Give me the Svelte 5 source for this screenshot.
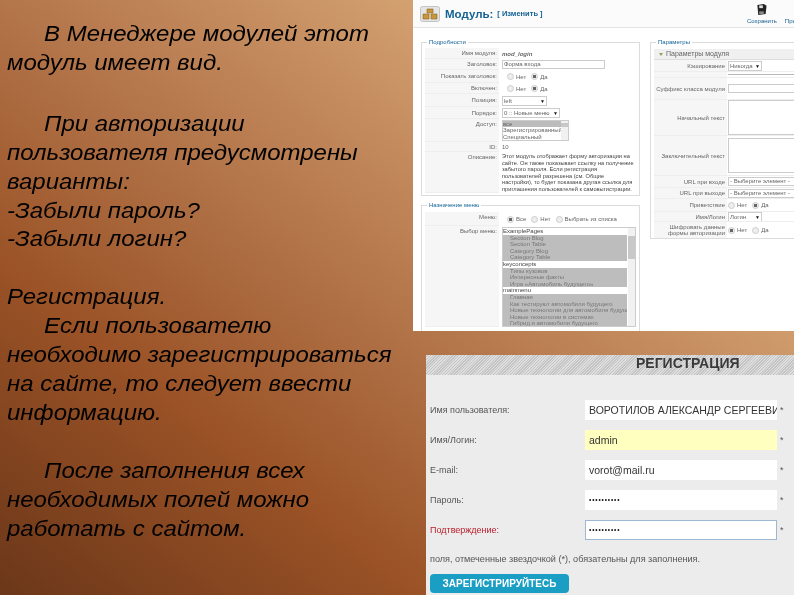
<script>
  const detailRows = [
    { label: 'Имя модуля:', h: 11, value: 'mod_login', kind: 'strong' },
    { label: 'Заголовок:', h: 11, value: 'Форма входа', kind: 'input' },
    { label: 'Показать заголовок:', h: 13, kind: 'radio', options: ['Нет', 'Да'], on: 1 },
    { label: 'Включен:', h: 11, kind: 'radio', options: ['Нет', 'Да'], on: 1 },
    { label: 'Позиция:', h: 13, value: 'left', kind: 'select', w: 41 },
    { label: 'Порядок:', h: 12, value: '0 :: Новые меню', kind: 'select', w: 54 }
  ];

  const menuList = [
    { text: 'ExamplePages', head: true },
    { text: 'Section Blog' },
    { text: 'Section Table' },
    { text: 'Category Blog' },
    { text: 'Category Table' },
    { text: 'keyconcepts', head: true },
    { text: 'Типы кузовов' },
    { text: 'Интересные факты' },
    { text: 'Игра «Автомобиль будущего»' },
    { text: 'mainmenu', head: true },
    { text: 'Главная' },
    { text: 'Как тестируют автомобили будущего' },
    { text: 'Новые технологии для автомобиля будущего?' },
    { text: 'Новые технологии в системах' },
    { text: 'Гибрид и автомобили будущего' }
  ];

  const regRows = [
    { label: 'Имя пользователя:', value: 'ВОРОТИЛОВ АЛЕКСАНДР СЕРГЕЕВИ' },
    { label: 'Имя/Логин:', value: 'admin', kind: 'filled' },
    { label: 'E-mail:', value: 'vorot@mail.ru' },
    { label: 'Пароль:', value: '••••••••••', dots: true },
    { label: 'Подтверждение:', value: '••••••••••', kind: 'error', dots: true }
  ];
</script>

<div class="slide">
  <section class="copy">
    <div class="flow">
      <p class="ind">В Менеджере модулей этот модуль имеет вид.</p>
      <p class="ind second">При авторизации пользователя предусмотрены варианты:</p>
      <p>-Забыли пароль?</p>
      <p>-Забыли логин?</p>
      <p class="gap">Регистрация.</p>
      <p class="ind">Если пользователю необходимо зарегистрироваться на сайте, то следует ввести информацию.</p>
      <p class="gap ind">После заполнения всех необходимых полей можно работать с сайтом.</p>
    </div>
  </section>

  <section class="shots">
    <div class="admin">
      <header class="toolbar">
        <svg class="box" width="20" height="16" viewBox="0 0 20 16">
          <rect x="0.5" y="0.5" width="19" height="15" rx="2" fill="#e4e4e4" stroke="#c4c4c4" />
          <path d="M7 3h6v4H7zM3 8h6v5H3zM11 8h6v5h-6z" fill="#c9963c" stroke="#8a6426" stroke-width="0.6" />
        </svg>
        <span class="mod-title">Модуль:</span>
        <span class="mod-sub">[ Изменить ]</span>
        <div class="tools">
          <span class="tool">
            <svg width="11" height="11" viewBox="0 0 11 12">
              <path d="M1 1l7-1 3 2-1 9-8 1z" fill="#222" />
              <path d="M3 1.5h4v3H3z" fill="#ddd" />
              <path d="M3 8h5v3H3z" fill="#888" />
            </svg>
            Сохранить
          </span>
          <span class="tool">
            <svg width="11" height="11" viewBox="0 0 11 12">
              <path d="M1 7l3 3 6-8" fill="none" stroke="#5f9b32" stroke-width="2" />
            </svg>
            Применить
          </span>
        </div>
      </header>

      <div class="panes">
        <div class="left-pane">
          <fieldset class="details">
            <legend>Подробности</legend>
            {#each detailRows as row}
              <div class="row" style="height:{row.h}px">
                <span class="lab">{row.label}</span>
                <span class="val" class:rad={row.kind === 'radio'}>
                  {#if row.kind === 'strong'}
                    <b><i>{row.value}</i></b>
                  {:else if row.kind === 'input'}
                    <span class="field wide">{row.value}</span>
                  {:else if row.kind === 'select'}
                    <span class="pick" style="width:{row.w}px">{row.value}<em>▼</em></span>
                  {:else}
                    {#each row.options as opt, i}
                      <span class="radio" class:on={row.on === i}></span>
                      <span class="opt">{opt}</span>
                    {/each}
                  {/if}
                </span>
              </div>
            {/each}
            <div class="row" style="height:23px">
              <span class="lab t">Доступ:</span>
              <span class="val top">
                <span class="listbox">
                  <span class="sel">все</span>
                  <span>Зарегистрированный</span>
                  <span>Специальный</span>
                  <i class="sb"></i>
                </span>
              </span>
            </div>
            <div class="row" style="height:10px">
              <span class="lab">ID:</span>
              <span class="val">10</span>
            </div>
            <div class="row" style="height:41px">
              <span class="lab t">Описание:</span>
              <span class="val top desc">Этот модуль отображает форму авторизации на сайте. Он также показывает ссылку на получение забытого пароля. Если регистрация пользователей разрешена (см. Общие настройки), то будет показана другая ссылка для приглашения пользователей к самовыгистрации.</span>
            </div>
          </fieldset>

          <fieldset class="menu">
            <legend>Назначение меню</legend>
            <div class="row" style="height:14px">
              <span class="lab t">Меню:</span>
              <span class="val rad">
                <span class="radio on"></span><span class="opt">Все</span>
                <span class="radio"></span><span class="opt">Нет</span>
                <span class="radio"></span><span class="opt">Выбрать из списка</span>
              </span>
            </div>
            <div class="row" style="height:101px">
              <span class="lab t">Выбор меню:</span>
              <span class="val top">
                <span class="menulist">
                  {#each menuList as item}
                    <span class:head={item.head}>{item.text}</span>
                  {/each}
                  <i class="sb"></i>
                </span>
              </span>
            </div>
          </fieldset>
        </div>

        <fieldset class="params">
          <legend>Параметры</legend>
          <div class="params-head"><span class="tri"></span>Параметры модуля</div>
          <div class="prow" style="height:12px"><span class="plab">Кэширование</span><span class="pick small">Никогда<em>▼</em></span></div>
          <div class="prow" style="height:6px"><span class="plab"></span><span class="rule"></span></div>
          <div class="prow" style="height:22px"><span class="plab">Суффикс класса модуля</span><span class="field long"></span></div>
          <div class="prow" style="height:36px"><span class="plab">Начальный текст</span><span class="area"></span></div>
          <div class="prow" style="height:40px"><span class="plab">Заключительный текст</span><span class="area"></span></div>
          <div class="prow" style="height:12px"><span class="plab">URL при входе</span><span class="field long">- Выберите элемент -</span></div>
          <div class="prow" style="height:11px"><span class="plab">URL при выходе</span><span class="field long">- Выберите элемент -</span></div>
          <div class="prow" style="height:13px"><span class="plab">Приветствие</span><span class="val"><span class="radio"></span><span class="opt">Нет</span><span class="radio on"></span><span class="opt">Да</span></span></div>
          <div class="prow" style="height:10px"><span class="plab">Имя/Логин</span><span class="pick small">Логин<em>▼</em></span></div>
          <div class="prow" style="height:17px"><span class="plab">Шифровать данные формы авторизации</span><span class="val"><span class="radio on"></span><span class="opt">Нет</span><span class="radio"></span><span class="opt">Да</span></span></div>
        </fieldset>
      </div>
    </div>

    <div class="register">
      <h2>РЕГИСТРАЦИЯ</h2>
      <div class="reg-rows">
        {#each regRows as row}
          <div class="reg-row" class:err={row.kind === 'error'}>
            <span class="reg-lab">{row.label}</span>
            <span class="reg-field" class:filled={row.kind === 'filled'} class:focus={row.kind === 'error'} class:dots={row.dots}>{row.value}</span>
            <span class="star">*</span>
          </div>
        {/each}
      </div>
      <p class="note">поля, отмеченные звездочкой (*), обязательны для заполнения.</p>
      <button class="send">ЗАРЕГИСТРИРУЙТЕСЬ</button>
    </div>
  </section>
</div>

<style>
  :global(body) {
    margin: 0;
  }

  .slide {
    width: 794px;
    height: 595px;
    overflow: hidden;
    display: flex;
    background: linear-gradient(38deg, #6b3719 0%, #9a5226 27%, #b3754a 49%, #d3a070 75%, #dcaa78 100%);
  }

  .copy {
    width: 413px;
    flex: none;
    box-sizing: border-box;
    padding: 20px 0 0 7px;
  }
  /* the slide text is a bit wider than plain Arial, same as in the source deck */
  .flow {
    width: 362px;
    transform: scaleX(1.09);
    transform-origin: left top;
    font: italic 22px/28.9px "Liberation Sans", Arial, sans-serif;
    color: #000;
  }
  .flow p {
    margin: 0;
  }
  .ind {
    text-indent: 34px;
  }
  .flow .gap {
    margin-top: 29px;
  }
  .flow .second {
    margin-top: 32px;
  }

  .shots {
    width: 381px;
    flex: none;
  }

  .admin {
    height: 331px;
    overflow: hidden;
    background: #fff;
    font: 6px/8px "Liberation Sans", Arial, sans-serif;
    color: #666;
    filter: blur(0.35px);
  }
  .toolbar {
    height: 28px;
    display: flex;
    align-items: center;
    padding-left: 7px;
    background: #fbfbfb;
    border-bottom: 1px solid #e4e4e4;
    box-sizing: border-box;
  }
  .mod-title {
    margin-left: 5px;
    font-size: 11.5px;
    line-height: 16px;
    font-weight: bold;
    color: #146295;
  }
  .mod-sub {
    margin-left: 4px;
    font-size: 7.5px;
    font-weight: bold;
    color: #146295;
  }
  .tools {
    margin-left: auto;
    display: flex;
    gap: 8px;
    width: 47px;
    flex: none;
    overflow: hidden;
    color: #146295;
  }
  .tool {
    display: flex;
    flex-direction: column;
    align-items: center;
    gap: 2px;
    padding-top: 1px;
  }

  .panes {
    display: flex;
    padding: 11px 0 0 8px;
    gap: 10px;
  }
  .left-pane {
    width: 219px;
    flex: none;
  }

  fieldset {
    margin: 0;
    padding: 0 3px 3px;
    border: 1px solid #dcdcdc;
    box-sizing: border-box;
    min-width: 0;
  }
  legend {
    margin-left: 2px;
    padding: 0 2px;
    font-size: 6px;
    line-height: 7px;
    color: #146295;
  }
  .details {
    height: 157px;
    margin-bottom: 6px;
    padding-top: 2px;
  }
  .menu {
    height: 135px;
    padding-top: 3px;
  }

  .row {
    display: flex;
    overflow: hidden;
  }
  .lab {
    width: 74px;
    flex: none;
    box-sizing: border-box;
    display: flex;
    align-items: center;
    justify-content: flex-end;
    padding-right: 2px;
    margin-right: 3px;
    background: #f6f6f6;
    border-bottom: 1px solid #eee;
    white-space: nowrap;
  }
  .lab.t {
    align-items: flex-start;
    padding-top: 1px;
  }
  .val {
    display: flex;
    align-items: center;
    gap: 2px;
    min-width: 0;
  }
  .val.top {
    align-items: flex-start;
    padding-top: 1px;
  }
  .val.rad {
    padding-left: 5px;
  }
  .opt {
    margin-right: 3px;
  }
  .radio {
    width: 5px;
    height: 5px;
    flex: none;
    border: 1px solid #ccc;
    border-radius: 50%;
    background: #eee;
  }
  .radio.on {
    background: radial-gradient(circle, #666 0 45%, #eee 55%);
  }
  .field {
    height: 7px;
    line-height: 7px;
    padding: 0 1px;
    border: 1px solid #ccc;
    background: #fff;
    overflow: hidden;
    white-space: nowrap;
  }
  .wide {
    width: 99px;
  }
  .long {
    width: 70px;
    flex: none;
  }
  .pick {
    display: flex;
    justify-content: space-between;
    height: 8px;
    line-height: 8px;
    padding: 0 1px;
    border: 1px solid #ccc;
    background: #fff;
    white-space: nowrap;
    overflow: hidden;
  }
  .pick em {
    font-style: normal;
    font-size: 5px;
    color: #111;
  }
  .pick.small {
    width: 30px;
    flex: none;
  }
  .listbox,
  .menulist {
    position: relative;
    display: block;
    box-sizing: border-box;
    border: 1px solid #ccc;
    background: #fff;
    overflow: hidden;
  }
  .listbox span,
  .menulist span {
    display: block;
    white-space: nowrap;
  }
  .listbox {
    width: 67px;
    height: 21px;
    line-height: 6.4px;
    padding-right: 6px;
  }
  .listbox .sel {
    background: #bcbcbc;
  }
  .desc {
    width: 134px;
    display: block;
    color: #444;
    line-height: 6.5px;
    font-size: 5.7px;
  }
  .menulist {
    width: 134px;
    height: 100px;
    line-height: 6.6px;
  }
  .menulist span {
    padding-left: 7px;
    background: #bdbdbd;
    color: #777;
    margin-right: 8px;
    overflow: hidden;
  }
  .menulist span.head {
    padding-left: 0;
    background: #fff;
    color: #444;
  }
  .sb {
    position: absolute;
    right: 0;
    top: 0;
    bottom: 0;
    width: 7px;
    background: linear-gradient(#f1f1f1 8%, #c8c8c8 8% 32%, #f1f1f1 32%);
  }

  .params {
    width: 150px;
    flex: none;
    height: 200px;
    overflow: hidden;
    padding: 3px 0 0 3px;
  }
  .params-head {
    height: 11px;
    box-sizing: border-box;
    padding-left: 5px;
    font-size: 7px;
    background: #f0f0f0;
    border-bottom: 1px solid #ddd;
    color: #666;
    display: flex;
    align-items: center;
    gap: 3px;
  }
  .tri {
    width: 0;
    height: 0;
    border-left: 2px solid transparent;
    border-right: 2px solid transparent;
    border-top: 3px solid #8aa65a;
  }
  .prow {
    display: flex;
    align-items: center;
    gap: 1px;
    box-sizing: border-box;
    border-bottom: 1px solid #eee;
    overflow: hidden;
  }
  .plab {
    width: 73px;
    flex: none;
    align-self: stretch;
    display: flex;
    align-items: center;
    justify-content: flex-end;
    text-align: right;
    background: #f6f6f6;
    padding-right: 2px;
    box-sizing: border-box;
    line-height: 6px;
  }
  .rule {
    width: 72px;
    height: 1px;
    flex: none;
    background: #bbb;
  }
  .area {
    width: 70px;
    flex: none;
    height: 33px;
    border: 1px solid #ccc;
    background: #fff;
  }

  .register {
    margin: 24px 0 0 13px;
    height: 240px;
    background: #ececec;
    font-family: "Liberation Sans", Arial, sans-serif;
    color: #555;
    overflow: hidden;
    filter: blur(0.3px);
  }
  h2 {
    margin: 0;
    height: 20px;
    padding-left: 210px;
    font-size: 14px;
    line-height: 17px;
    color: #3a3a3a;
    background: repeating-linear-gradient(135deg, #dedede 0 1px, #c4c4c4 1px 2px);
  }
  .reg-rows {
    margin-top: 25px;
    display: flex;
    flex-direction: column;
    gap: 10px;
  }
  .reg-row {
    display: flex;
    align-items: center;
    height: 20px;
    padding-left: 4px;
    font-size: 9px;
  }
  .reg-row.err {
    color: #b8202c;
  }
  .reg-lab {
    width: 155px;
    flex: none;
  }
  .reg-field {
    width: 192px;
    height: 20px;
    flex: none;
    box-sizing: border-box;
    padding-left: 4px;
    line-height: 20px;
    font-size: 10.5px;
    color: #333;
    background: #fff;
    white-space: nowrap;
    overflow: hidden;
  }
  .reg-field.filled {
    background: #ffffc0;
  }
  .reg-field.focus {
    border: 1px solid #9db8d4;
    line-height: 18px;
    padding-left: 3px;
  }
  .reg-field.dots {
    font-size: 6.5px;
    letter-spacing: 0.85px;
    color: #111;
  }
  .star {
    margin-left: 3px;
    color: #555;
  }
  .note {
    margin: 13px 0 0 4px;
    font-size: 9.1px;
    line-height: 12px;
  }
  .send {
    display: block;
    margin: 9px 0 0 4px;
    width: 139px;
    height: 19px;
    padding: 0;
    border: none;
    border-radius: 4px;
    background: #1a9ec4;
    color: #fff;
    font: bold 10px "Liberation Sans", Arial, sans-serif;
  }
</style>
